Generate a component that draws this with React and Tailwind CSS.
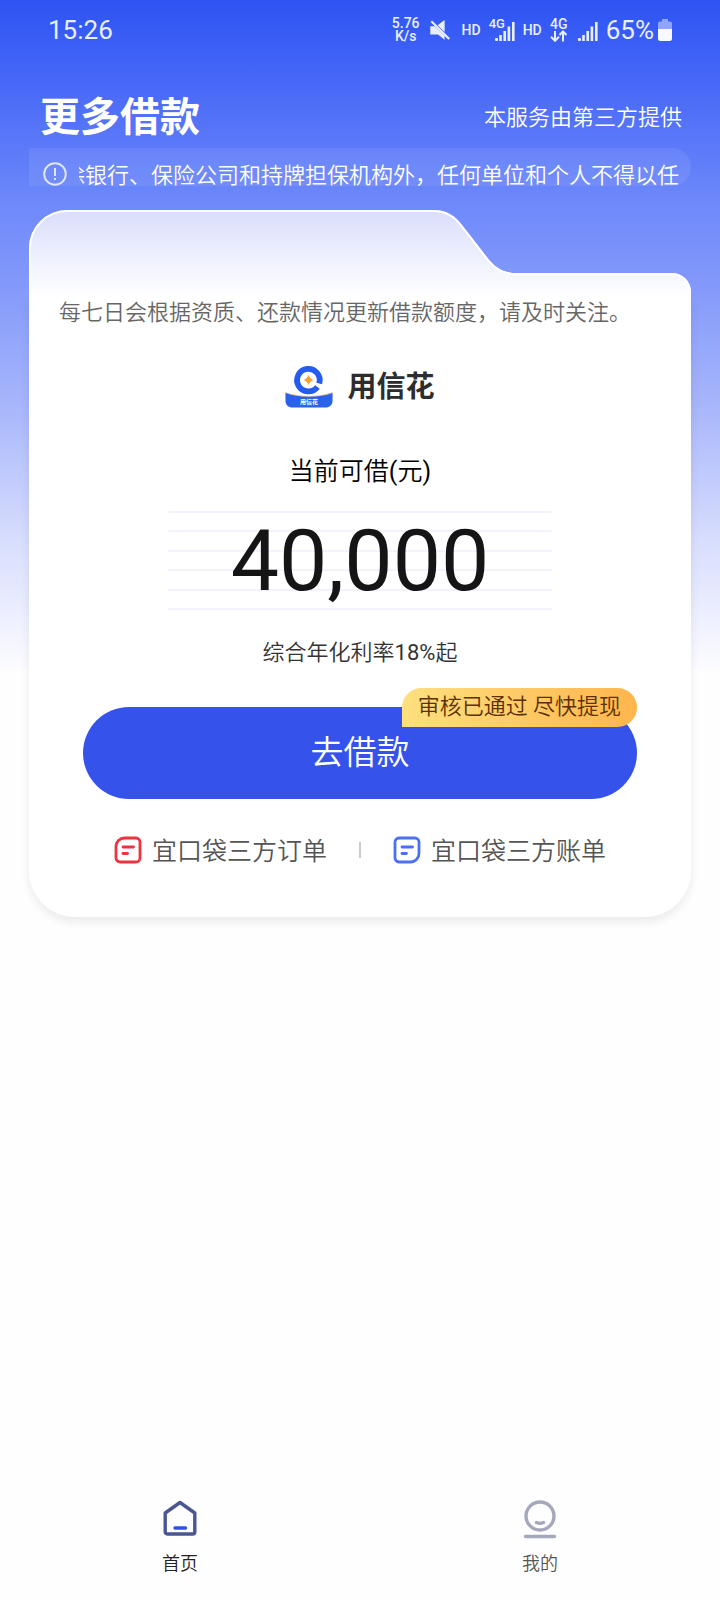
import React from "react";

function MuteIcon() {
  return (
    <svg viewBox="0 0 20 20" className="size-5" fill="#e9efff" aria-hidden="true">
      <path d="M7.600 5.200L14.600 0V12z" />
      <path d="M.3 6.300H4.600L14.600 15.700V19.800L8 14.500H.3z" />
      <path d="M1.300 1.200L19.200 19" stroke="#e9efff" strokeWidth="2.200" />
    </svg>
  );
}

function SignalIcon() {
  return (
    <svg viewBox="0 0 20 20" className="size-5" fill="#e9efff" aria-hidden="true">
      <rect x="0" y="16" width="3" height="3" rx="1" />
      <rect x="4.2" y="13" width="2.6" height="6" />
      <rect x="8.4" y="9" width="2.6" height="10" />
      <rect x="12.6" y="4.5" width="2.6" height="14.5" />
      <rect x="17" y="0" width="2.6" height="19" />
    </svg>
  );
}

function StatusBar() {
  return (
    <div className="flex h-15 items-center justify-between pr-12 pl-12 text-[#e9efff]">
      <time className="text-[26px] leading-8">15:26</time>
      <div className="flex items-center">
        <div className="text-center text-[14px] leading-[13px] font-medium">
          <div>5.76</div>
          <div>K/s</div>
        </div>
        <span className="ml-2.5">
          <MuteIcon />
        </span>
        <span className="ml-3 text-[14px] font-medium">HD</span>
        <span className="relative mt-1 ml-3.5">
          <SignalIcon />
          <span className="absolute -top-1.5 -left-1.5 text-[13px] leading-4 font-medium">4G</span>
        </span>
        <span className="ml-2 text-[14px] font-medium">HD</span>
        <span className="ml-2 flex flex-col items-center">
          <span className="text-[14px] leading-3 font-medium">4G</span>
          <svg viewBox="0 0 18 12" className="h-3 w-4.5" fill="none" stroke="#e9efff" strokeWidth="2" aria-hidden="true">
            <path d="M5 1v10M1 6.8l4 4 4-4M13 11.500V1.500M9.500 5l3.500-3.500 3.500 3.500" />
          </svg>
        </span>
        <span className="mt-1 ml-2.5">
          <SignalIcon />
        </span>
        <span className="ml-2 text-[26px] leading-8">65%</span>
        <svg viewBox="0 0 14 22" className="ml-1 h-5.5 w-3.5" aria-hidden="true">
          <path d="M4 0h6v2.500h2a2 2 0 0 1 2 2V10H0V4.500a2 2 0 0 1 2-2h2z" fill="#8fa6fb" />
          <path d="M0 10h14v9.500a2.500 2.500 0 0 1-2.500 2.500h-9A2.500 2.500 0 0 1 0 19.500z" fill="#f7f9ff" />
        </svg>
      </div>
    </div>
  );
}

function BrandLogo() {
  return (
    <svg viewBox="0 0 48 44" className="h-11 w-12" aria-hidden="true">
      <path d="M.5 27C14 32.500 34 32.500 47.500 27v6C34 36 14 36 .5 33z" fill="#eec29a" />
      <path d="M.5 28C14 33 34 33 47.500 28V36c0 4-3 6.500-7 6.500h-33c-4 0-7-2.500-7-6.500z" fill="#2a63ea" />
      <path d="M34.200 18.500A11.300 11.300 0 1 0 32.400 22" fill="none" stroke="#245cf0" strokeWidth="5.800" />
      <path d="M23.500 9.800q1.200 4 5 5.200-3.800 1.200-5 5.200-1.200-4-5-5.200 3.800-1.200 5-5.200z" fill="#f6a12d" />
      <text x="24" y="39" textAnchor="middle" fontSize="6" fontWeight="700" fill="#fff">
        用信花
      </text>
    </svg>
  );
}

function OrderIcon() {
  return (
    <svg viewBox="0 0 28 28" className="h-8 w-7 pb-1" fill="none" stroke="#f0323f" strokeWidth="2.800" strokeLinecap="round" aria-hidden="true">
      <path d="M10.500 2H22a4 4 0 0 1 4 4v16a4 4 0 0 1-4 4H6a4 4 0 0 1-4-4V10.500A8.500 8.500 0 0 1 10.500 2z" />
      <path d="M9 11h10.500M9 17.500h4.500" />
    </svg>
  );
}

function BillIcon() {
  return (
    <svg viewBox="0 0 28 28" className="h-8 w-7 pb-1" fill="none" stroke="#4c70f5" strokeWidth="2.800" strokeLinecap="round" aria-hidden="true">
      <path d="M6 2h16a4 4 0 0 1 4 4v11.500a8.500 8.500 0 0 1-8.500 8.500H6a4 4 0 0 1-4-4V6a4 4 0 0 1 4-4z" />
      <path d="M9 11h10.500M9 17.500h4.500" />
    </svg>
  );
}

function CardTop() {
  return (
    <svg viewBox="0 0 662 88" className="relative block h-auto w-full" aria-hidden="true">
      <defs>
        <linearGradient id="fold" x1="0" y1="0" x2="0" y2="1">
          <stop offset="0" stopColor="#d9defb" />
          <stop offset="1" stopColor="#ffffff" />
        </linearGradient>
        <clipPath id="foldShape">
          <path d="M0 88V38A38 38 0 0 1 38 0H404C418 0 426 6 433 15L457 46C466 58 474 63 488 63H643A19 19 0 0 1 662 82V88Z" />
        </clipPath>
      </defs>
      <g clipPath="url(#foldShape)">
        <path d="M0 0H662V88H0Z" fill="url(#fold)" />
        <path
          d="M0 90V38A38 38 0 0 1 38 0H404C418 0 426 6 433 15L457 46C466 58 474 63 488 63H643A19 19 0 0 1 662 82V90"
          fill="none"
          stroke="#fff"
          strokeWidth="4"
        />
      </g>
    </svg>
  );
}

function Amount() {
  return (
    <div className="relative mt-5 flex h-[99px] w-[384px] items-center justify-center">
      <div className="absolute inset-0 flex flex-col justify-between">
        {[0, 1, 2, 3, 4, 5].map((line) => (
          <div key={line} className="h-0.5 bg-[#f2f3fc]" />
        ))}
      </div>
      <p className="relative text-[86px] leading-[99px] font-normal text-[#151515]">40,000</p>
    </div>
  );
}

function NavItem({ label, active, children }) {
  return (
    <a
      href="#"
      aria-current={active ? "page" : undefined}
      className={
        active
          ? "flex flex-1 flex-col items-center gap-[11px] text-[18px] leading-7 font-[350] text-[#222]"
          : "flex flex-1 flex-col items-center gap-[11px] text-[18px] leading-7 font-[350] text-[#555]"
      }
    >
      {children}
      {label}
    </a>
  );
}

export default function App() {
  return (
    <div className="flex min-h-screen flex-col bg-[#fefefe] bg-[linear-gradient(to_bottom,#2d54f3_0%,#4264f7_10%,#6f8afa_31%,#8298fa_42%,#a6b5fb_60%,#d6dcfd_80%,#fcfcff_100%)] bg-[length:100%_670px] bg-no-repeat font-[Roboto,'Noto_Sans_CJK_SC',sans-serif]">
      <StatusBar />

      <header className="flex items-center justify-between pt-7 pr-9.5 pl-10 text-white">
        <h1 className="text-[40px] leading-15 font-bold">更多借款</h1>
        <p className="text-[22px] leading-8 font-[350]">本服务由第三方提供</p>
      </header>

      <main className="px-[29px]">
        <div className="flex h-[38px] items-end rounded-r-full bg-white/8 pr-3 pl-3.5 text-white">
          <svg viewBox="0 0 24 24" className="size-6 shrink-0" fill="none" stroke="#dfe6ff" strokeWidth="2" aria-hidden="true">
            <circle cx="12" cy="12" r="10.800" />
            <path d="M12 6v8M12 16v2" />
          </svg>
          <div className="ml-3 flex min-w-0 flex-1 justify-end overflow-x-clip">
            <p className="text-[22px] leading-5 font-[350] whitespace-nowrap">
              除银行、保险公司和持牌担保机构外，任何单位和个人不得以任
            </p>
          </div>
        </div>

        <section className="mt-6">
          <CardTop />
          <div className="flex flex-col items-center rounded-b-[46px] bg-white pb-[47px] font-[350] shadow-[0_5px_10px_rgba(0,0,0,0.08)]">
            <p className="self-stretch px-[30px] text-[22px] leading-[30px] text-[#666]">
              每七日会根据资质、还款情况更新借款额度，请及时关注。
            </p>

            <div className="mt-[37px] flex items-center gap-3.5">
              <BrandLogo />
              <h2 className="text-[29px] leading-11 font-bold text-[#2d2d2d]">用信花</h2>
            </div>

            <p className="mt-11 text-[25px] leading-[38px] text-black">
              当前可借<span className="font-normal">(</span>元<span className="font-normal">)</span>
            </p>
            <Amount />
            <p className="mt-6 text-[22px] leading-[38px] text-[#333]">
              综合年化利率<span className="font-normal">18%</span>起
            </p>

            <div className="relative mt-[35px] self-stretch px-[54px]">
              <button className="h-[92px] w-full rounded-full bg-[#3552ea] text-[33px] font-[350] text-white">
                去借款
              </button>
              <span className="absolute -top-[19px] right-[54px] h-[39px] rounded-[20px] rounded-bl-none bg-linear-to-r from-[#fde07e] to-[#ffb54c] px-4 text-[22px] leading-[37px] text-[#5c3000]">
                审核已通过 尽快提现
              </span>
            </div>

            <div className="mt-[35px] flex items-center text-[25px] leading-9 text-[#555]">
              <a href="#" className="flex items-center gap-2.5">
                <OrderIcon />
                宜口袋三方订单
              </a>
              <span className="mx-8 mb-1 h-4 w-0.5 bg-[#ccc]" />
              <a href="#" className="flex items-center gap-2.5">
                <BillIcon />
                宜口袋三方账单
              </a>
            </div>
          </div>
        </section>
      </main>

      <nav className="mt-auto flex pb-5.5">
        <NavItem label="首页" active>
          <svg viewBox="0 0 36 40" className="h-10 w-9" fill="none" strokeWidth="3.400" strokeLinecap="round" strokeLinejoin="round" aria-hidden="true">
            <path d="M3.200 14L18 3.500 32.800 14V33a2 2 0 0 1-2 2H5.200a2 2 0 0 1-2-2z" stroke="#4a5591" />
            <path d="M13 29h10.500" stroke="#3350e2" />
          </svg>
        </NavItem>
        <NavItem label="我的">
          <svg viewBox="0 0 36 40" className="h-10 w-9" fill="none" stroke="#a5a8bb" strokeWidth="3.400" strokeLinecap="round" aria-hidden="true">
            <circle cx="18" cy="17" r="14" />
            <path d="M14.500 23.500q3.500 1.600 7 0M3.500 37.500h29" />
          </svg>
        </NavItem>
      </nav>
    </div>
  );
}
